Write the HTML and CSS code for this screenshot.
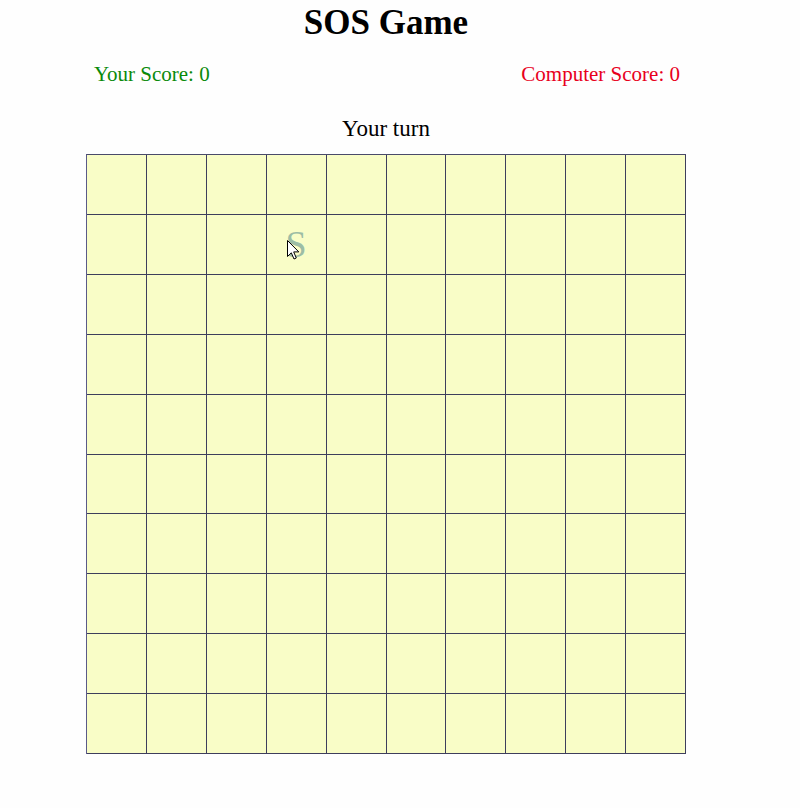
FILE: index.html
```html
<!DOCTYPE html>
<html>
<head>
<meta charset="utf-8">
<title>SOS Game</title>
<link rel="stylesheet" href="styles.css">
</head>
<body>
<div class="page">
  <h1 class="title">SOS Game</h1>
  <div class="scores">
    <span class="score score-you">Your Score: 0</span>
    <span class="score score-cpu">Computer Score: 0</span>
  </div>
  <div class="turn">Your turn</div>
  <div class="board">
    <div class="cell"></div><div class="cell"></div><div class="cell"></div><div class="cell"></div><div class="cell"></div><div class="cell"></div><div class="cell"></div><div class="cell"></div><div class="cell"></div><div class="cell"></div>
    <div class="cell"></div><div class="cell"></div><div class="cell"></div>
    <div class="cell cell-hover"><span class="ghost">S</span><svg class="cursor" width="13" height="20" viewBox="0 0 13 20"><path d="M0.5 0.5 L0.5 16.5 L4.3 12.8 L7 19 L9.3 18 L6.7 11.9 L11.8 11.9 Z" fill="#fff" stroke="#000" stroke-width="1" stroke-linejoin="miter"/></svg></div>
    <div class="cell"></div><div class="cell"></div><div class="cell"></div><div class="cell"></div><div class="cell"></div><div class="cell"></div>
    <div class="cell"></div><div class="cell"></div><div class="cell"></div><div class="cell"></div><div class="cell"></div><div class="cell"></div><div class="cell"></div><div class="cell"></div><div class="cell"></div><div class="cell"></div>
    <div class="cell"></div><div class="cell"></div><div class="cell"></div><div class="cell"></div><div class="cell"></div><div class="cell"></div><div class="cell"></div><div class="cell"></div><div class="cell"></div><div class="cell"></div>
    <div class="cell"></div><div class="cell"></div><div class="cell"></div><div class="cell"></div><div class="cell"></div><div class="cell"></div><div class="cell"></div><div class="cell"></div><div class="cell"></div><div class="cell"></div>
    <div class="cell"></div><div class="cell"></div><div class="cell"></div><div class="cell"></div><div class="cell"></div><div class="cell"></div><div class="cell"></div><div class="cell"></div><div class="cell"></div><div class="cell"></div>
    <div class="cell"></div><div class="cell"></div><div class="cell"></div><div class="cell"></div><div class="cell"></div><div class="cell"></div><div class="cell"></div><div class="cell"></div><div class="cell"></div><div class="cell"></div>
    <div class="cell"></div><div class="cell"></div><div class="cell"></div><div class="cell"></div><div class="cell"></div><div class="cell"></div><div class="cell"></div><div class="cell"></div><div class="cell"></div><div class="cell"></div>
    <div class="cell"></div><div class="cell"></div><div class="cell"></div><div class="cell"></div><div class="cell"></div><div class="cell"></div><div class="cell"></div><div class="cell"></div><div class="cell"></div><div class="cell"></div>
    <div class="cell"></div><div class="cell"></div><div class="cell"></div><div class="cell"></div><div class="cell"></div><div class="cell"></div><div class="cell"></div><div class="cell"></div><div class="cell"></div><div class="cell"></div>
  </div>
</div>
</body>
</html>
```
FILE: styles.css
```css
html, body {
  margin: 0;
  padding: 0;
  background: #fefefe;
}

body {
  font-family: "Liberation Serif", "Times New Roman", serif;
  color: #000;
}

.page {
  width: 772px;
  display: flex;
  flex-direction: column;
  align-items: center;
}

.title {
  margin: 3px 0 0;
  font-size: 35px;
  line-height: 40px;
  font-weight: bold;
}

.scores {
  width: 600px;
  box-sizing: border-box;
  margin-top: 19px;
  padding: 0 6px 0 8px;
  display: flex;
  justify-content: space-between;
  font-size: 21px;
  line-height: 24px;
}

.score-you {
  color: #0a8a0a;
}

.score-cpu {
  color: #e8001c;
}

.turn {
  margin-top: 30px;
  font-size: 23px;
  line-height: 26px;
}

.board {
  margin-top: 12px;
  box-sizing: border-box;
  width: 600px;
  height: 600px;
  display: grid;
  grid-template-columns: repeat(10, 1fr);
  grid-template-rows: repeat(10, 1fr);
  border-left: 1px solid #5a5a88;
  border-top: 1px solid #4a4a6a;
}

.cell {
  box-sizing: border-box;
  background: #f9fdc7;
  border-right: 1px solid #3e3e5c;
  border-bottom: 1px solid #3e3e5c;
  display: flex;
  align-items: center;
  justify-content: center;
  position: relative;
}

.ghost {
  font-size: 38px;
  line-height: 1;
  color: #9dbda5;
}

.cursor {
  position: absolute;
  left: 20px;
  top: 25px;
}
```
